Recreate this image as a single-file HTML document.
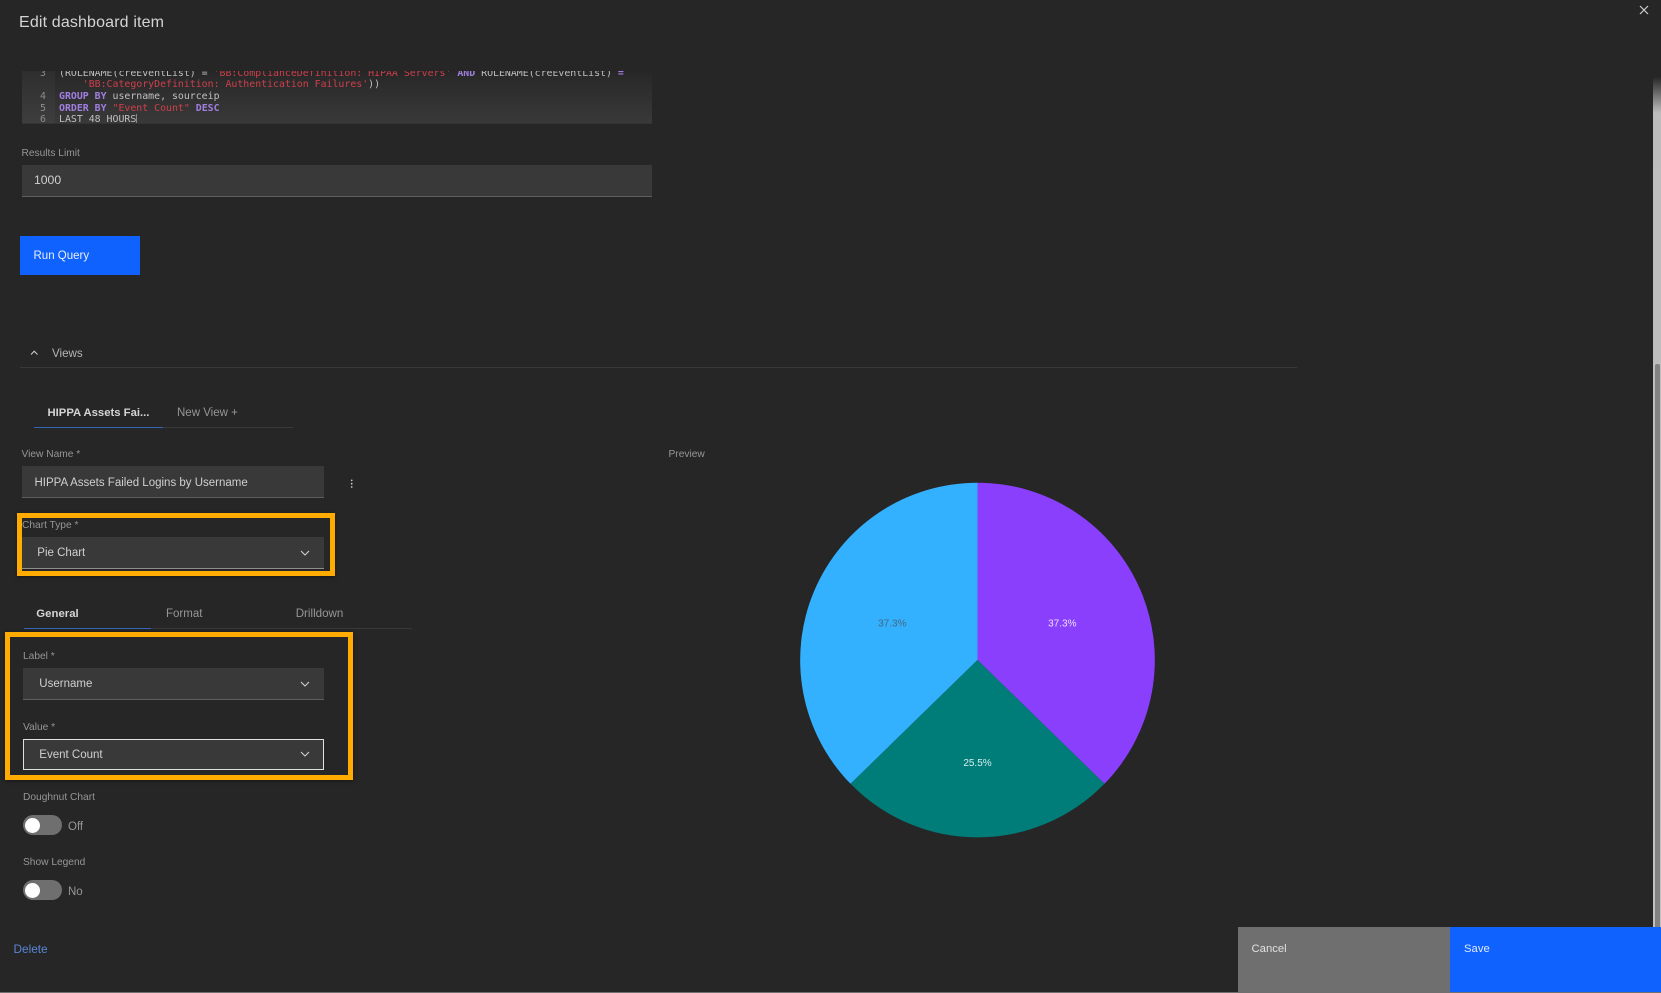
<!DOCTYPE html>
<html><head><meta charset="utf-8"><title>Edit dashboard item</title>
<style>
html,body{margin:0;padding:0;background:#262626;width:1661px;height:993px;overflow:hidden}
body{position:relative;font-family:"Liberation Sans",sans-serif;color:#c6c6c6}
.t{position:absolute;white-space:nowrap;height:16px;line-height:16px}
.b{position:absolute;box-sizing:border-box}
.lb{font-size:10.2px;color:#969696}
.f{background:#393939;border-bottom:1.5px solid #5e5e5e}
.v{font-size:11.5px;color:#d0d0d0}
#code{position:absolute;left:22px;top:71px;width:630px;height:52.7px;overflow:hidden;background:linear-gradient(#262626 0,#2a2a2a 15%,#393939 100%);border-bottom:1px solid #333;box-sizing:border-box}
#gut{position:absolute;left:0;top:0;width:33px;height:53px;background:linear-gradient(#2e2e2e,#3e3e3e)}
.l{position:absolute;left:37px;font:9.9px/11.7px "DejaVu Sans Mono",monospace;color:#c0c0c0;white-space:pre}
.n{position:absolute;left:0;width:24px;text-align:right;font:9.9px/11.7px "DejaVu Sans Mono",monospace;color:#8d8d8d}
.k{color:#a07fe0;font-weight:bold}.s{color:#cf3f4c}
svg{position:absolute;overflow:visible}
.or{position:absolute;box-sizing:border-box;border:5px solid #ffab00;box-shadow:0 1px 4px rgba(0,0,0,.45)}
.tg{position:absolute;left:23px;width:39px;border-radius:10px;background:#6f6f6f}
.kn{position:absolute;left:1.7px;width:15px;height:15px;border-radius:50%;background:#fff}
</style></head><body>

<div class="t" style="left:19px;top:14px;height:18px;line-height:18px;font-size:16px;color:#d4d4d4;letter-spacing:.15px">Edit dashboard item</div>
<svg style="left:1639px;top:5px" width="10" height="10" viewBox="0 0 10 10"><path d="M1 1L9 9M9 1L1 9" stroke="#d0d0d0" stroke-width="1.2" fill="none"/></svg>

<div id="code">
<div id="gut"></div>
<div class="n" style="top:-3.4px">3</div>
<div class="n" style="top:20px">4</div>
<div class="n" style="top:31.7px">5</div>
<div class="n" style="top:43.4px">6</div>
<div class="l" style="top:-3.4px">(ROLENAME(creEventList) = <span class="s">'BB:ComplianceDefinition: HIPAA Servers'</span> <span class="k">AND</span> ROLENAME(creEventList) <span class="k">=</span></div>
<div class="l" style="top:8.3px">    <span class="s">'BB:CategoryDefinition: Authentication Failures'</span>))</div>
<div class="l" style="top:20px"><span class="k">GROUP BY</span> username, sourceip</div>
<div class="l" style="top:31.7px"><span class="k">ORDER BY</span> <span class="s">"Event Count"</span> <span class="k">DESC</span></div>
<div class="l" style="top:43.4px">LAST 48 HOURS<span style="border-left:1px solid #888;height:11px;display:inline-block;vertical-align:top"></span></div>
</div>

<div class="t lb" style="left:21.5px;top:146px">Results Limit</div>
<div class="b f" style="left:21.5px;top:165px;width:630px;height:32px"></div>
<div class="t v" style="left:34px;top:172px;font-size:12.2px">1000</div>

<div class="b" style="left:20px;top:236px;width:120px;height:38.5px;background:#0f62fe"></div>
<div class="t" style="left:33.5px;top:247.5px;font-size:11.5px;color:#e8eefc">Run Query</div>

<svg style="left:30px;top:350px" width="9" height="6" viewBox="0 0 9 6"><path d="M1 4.5L4.2 1.2L7.5 4.5" stroke="#c6c6c6" stroke-width="1.1" fill="none"/></svg>
<div class="t" style="left:52px;top:346px;font-size:11.6px;color:#b5b5b5">Views</div>
<div class="b" style="left:20px;top:367px;width:1277px;height:1px;background:#393939"></div>

<div class="t" style="left:47.5px;top:405px;font-size:11.3px;font-weight:bold;color:#d4d4d4">HIPPA Assets Fai...</div>
<div class="t" style="left:177px;top:405px;font-size:11.5px;color:#969696">New View +</div>
<div class="b" style="left:34px;top:427px;width:259px;height:1px;background:#393939"></div>
<div class="b" style="left:34px;top:426.5px;width:129px;height:1.5px;background:#3566b5"></div>

<div class="t lb" style="left:21.5px;top:447px">View Name *</div>
<div class="b f" style="left:21.5px;top:466px;width:302.5px;height:32px"></div>
<div class="t v" style="left:34.5px;top:475px">HIPPA Assets Failed Logins by Username</div>
<svg style="left:350px;top:479px" width="4" height="10" viewBox="0 0 4 10"><circle cx="1.7" cy="1.4" r=".9" fill="#c6c6c6"/><circle cx="1.7" cy="4.7" r=".9" fill="#c6c6c6"/><circle cx="1.7" cy="8" r=".9" fill="#c6c6c6"/></svg>

<div class="or" style="left:17px;top:513px;width:318px;height:63px"></div>
<div class="t lb" style="left:22px;top:517.5px">Chart Type *</div>
<div class="b f" style="left:22px;top:536.5px;width:302px;height:32.5px;border-bottom-color:#8d8d8d"></div>
<div class="t v" style="left:37.3px;top:545.4px">Pie Chart</div>
<svg style="left:300px;top:550px" width="10" height="6" viewBox="0 0 10 6"><path d="M1 1L5 5L9 1" stroke="#d0d0d0" stroke-width="1.1" fill="none"/></svg>

<div class="t" style="left:36.3px;top:606px;font-size:11.4px;font-weight:bold;color:#d4d4d4">General</div>
<div class="t" style="left:166px;top:606px;font-size:11.5px;color:#969696">Format</div>
<div class="t" style="left:295.7px;top:606px;font-size:11.6px;color:#969696">Drilldown</div>
<div class="b" style="left:24px;top:628px;width:388px;height:1px;background:#393939"></div>
<div class="b" style="left:23.5px;top:627.5px;width:127.5px;height:1.5px;background:#3566b5"></div>

<div class="or" style="left:5px;top:632px;width:348px;height:148px"></div>
<div class="t lb" style="left:23px;top:648.5px">Label *</div>
<div class="b f" style="left:23px;top:668px;width:301px;height:32px"></div>
<div class="t v" style="left:39.3px;top:676px">Username</div>
<svg style="left:300px;top:681px" width="10" height="6" viewBox="0 0 10 6"><path d="M1 1L5 5L9 1" stroke="#d0d0d0" stroke-width="1.1" fill="none"/></svg>
<div class="t lb" style="left:23px;top:719.5px">Value *</div>
<div class="b" style="left:23px;top:739px;width:300.5px;height:31px;background:#393939;border:1.3px solid #e0e0e0"></div>
<div class="t v" style="left:39.3px;top:747px">Event Count</div>
<svg style="left:300px;top:751px" width="10" height="6" viewBox="0 0 10 6"><path d="M1 1L5 5L9 1" stroke="#d0d0d0" stroke-width="1.1" fill="none"/></svg>

<div class="t lb" style="left:23px;top:790px">Doughnut Chart</div>
<div class="tg" style="top:815px;height:20px"><div class="kn" style="top:2.5px"></div></div>
<div class="t" style="left:68px;top:818.5px;font-size:11.5px;color:#969696">Off</div>
<div class="t lb" style="left:23px;top:854.5px">Show Legend</div>
<div class="tg" style="top:880px;height:19.5px"><div class="kn" style="top:2.5px"></div></div>
<div class="t" style="left:68px;top:883.5px;font-size:11.5px;color:#969696">No</div>

<div class="t lb" style="left:668.5px;top:446.5px">Preview</div>
<svg style="left:0;top:0" width="1661" height="993" viewBox="0 0 1661 993">
<path d="M977.5 660L850.55 783.8A177.3 177.3 0 0 1 977.5 482.7Z" fill="#33b1ff"/>
<path d="M977.5 660L977.5 482.7A177.3 177.3 0 0 1 1104.45 783.8Z" fill="#8a3ffc"/>
<path d="M977.5 660L1104.45 783.8A177.3 177.3 0 0 1 850.55 783.8Z" fill="#007d79"/>
<text x="892.3" y="626.5" font-size="10" text-anchor="middle" fill="#44697f" font-family="Liberation Sans">37.3%</text>
<text x="1062.3" y="626.5" font-size="10" text-anchor="middle" fill="#ecdfff" font-family="Liberation Sans">37.3%</text>
<text x="977.5" y="765.8" font-size="10" text-anchor="middle" fill="#d5efee" font-family="Liberation Sans">25.5%</text>
</svg>

<div class="b" style="left:1652.7px;top:77px;width:8.3px;height:850px;background:linear-gradient(#262626 0,#bdbdbd 36px,#c1c1c1 100%)"></div>
<div class="b" style="left:1655.3px;top:364px;width:5px;height:563px;background:#828282;border-radius:2px 2px 0 0"></div>

<div class="t" style="left:13.5px;top:940.5px;font-size:11.8px;color:#5a86d8">Delete</div>
<div class="b" style="left:1237.7px;top:927px;width:212.3px;height:65px;background:#6f6f6f"></div>
<div class="t" style="left:1251.5px;top:940.5px;font-size:11.3px;color:#e0e0e0">Cancel</div>
<div class="b" style="left:1450px;top:927px;width:211px;height:65px;background:#0f62fe"></div>
<div class="t" style="left:1464px;top:940.5px;font-size:11.3px;color:#dfe8fd">Save</div>
<div class="b" style="left:0;top:992px;width:1661px;height:1px;background:#6f6f6f"></div>
</body></html>
